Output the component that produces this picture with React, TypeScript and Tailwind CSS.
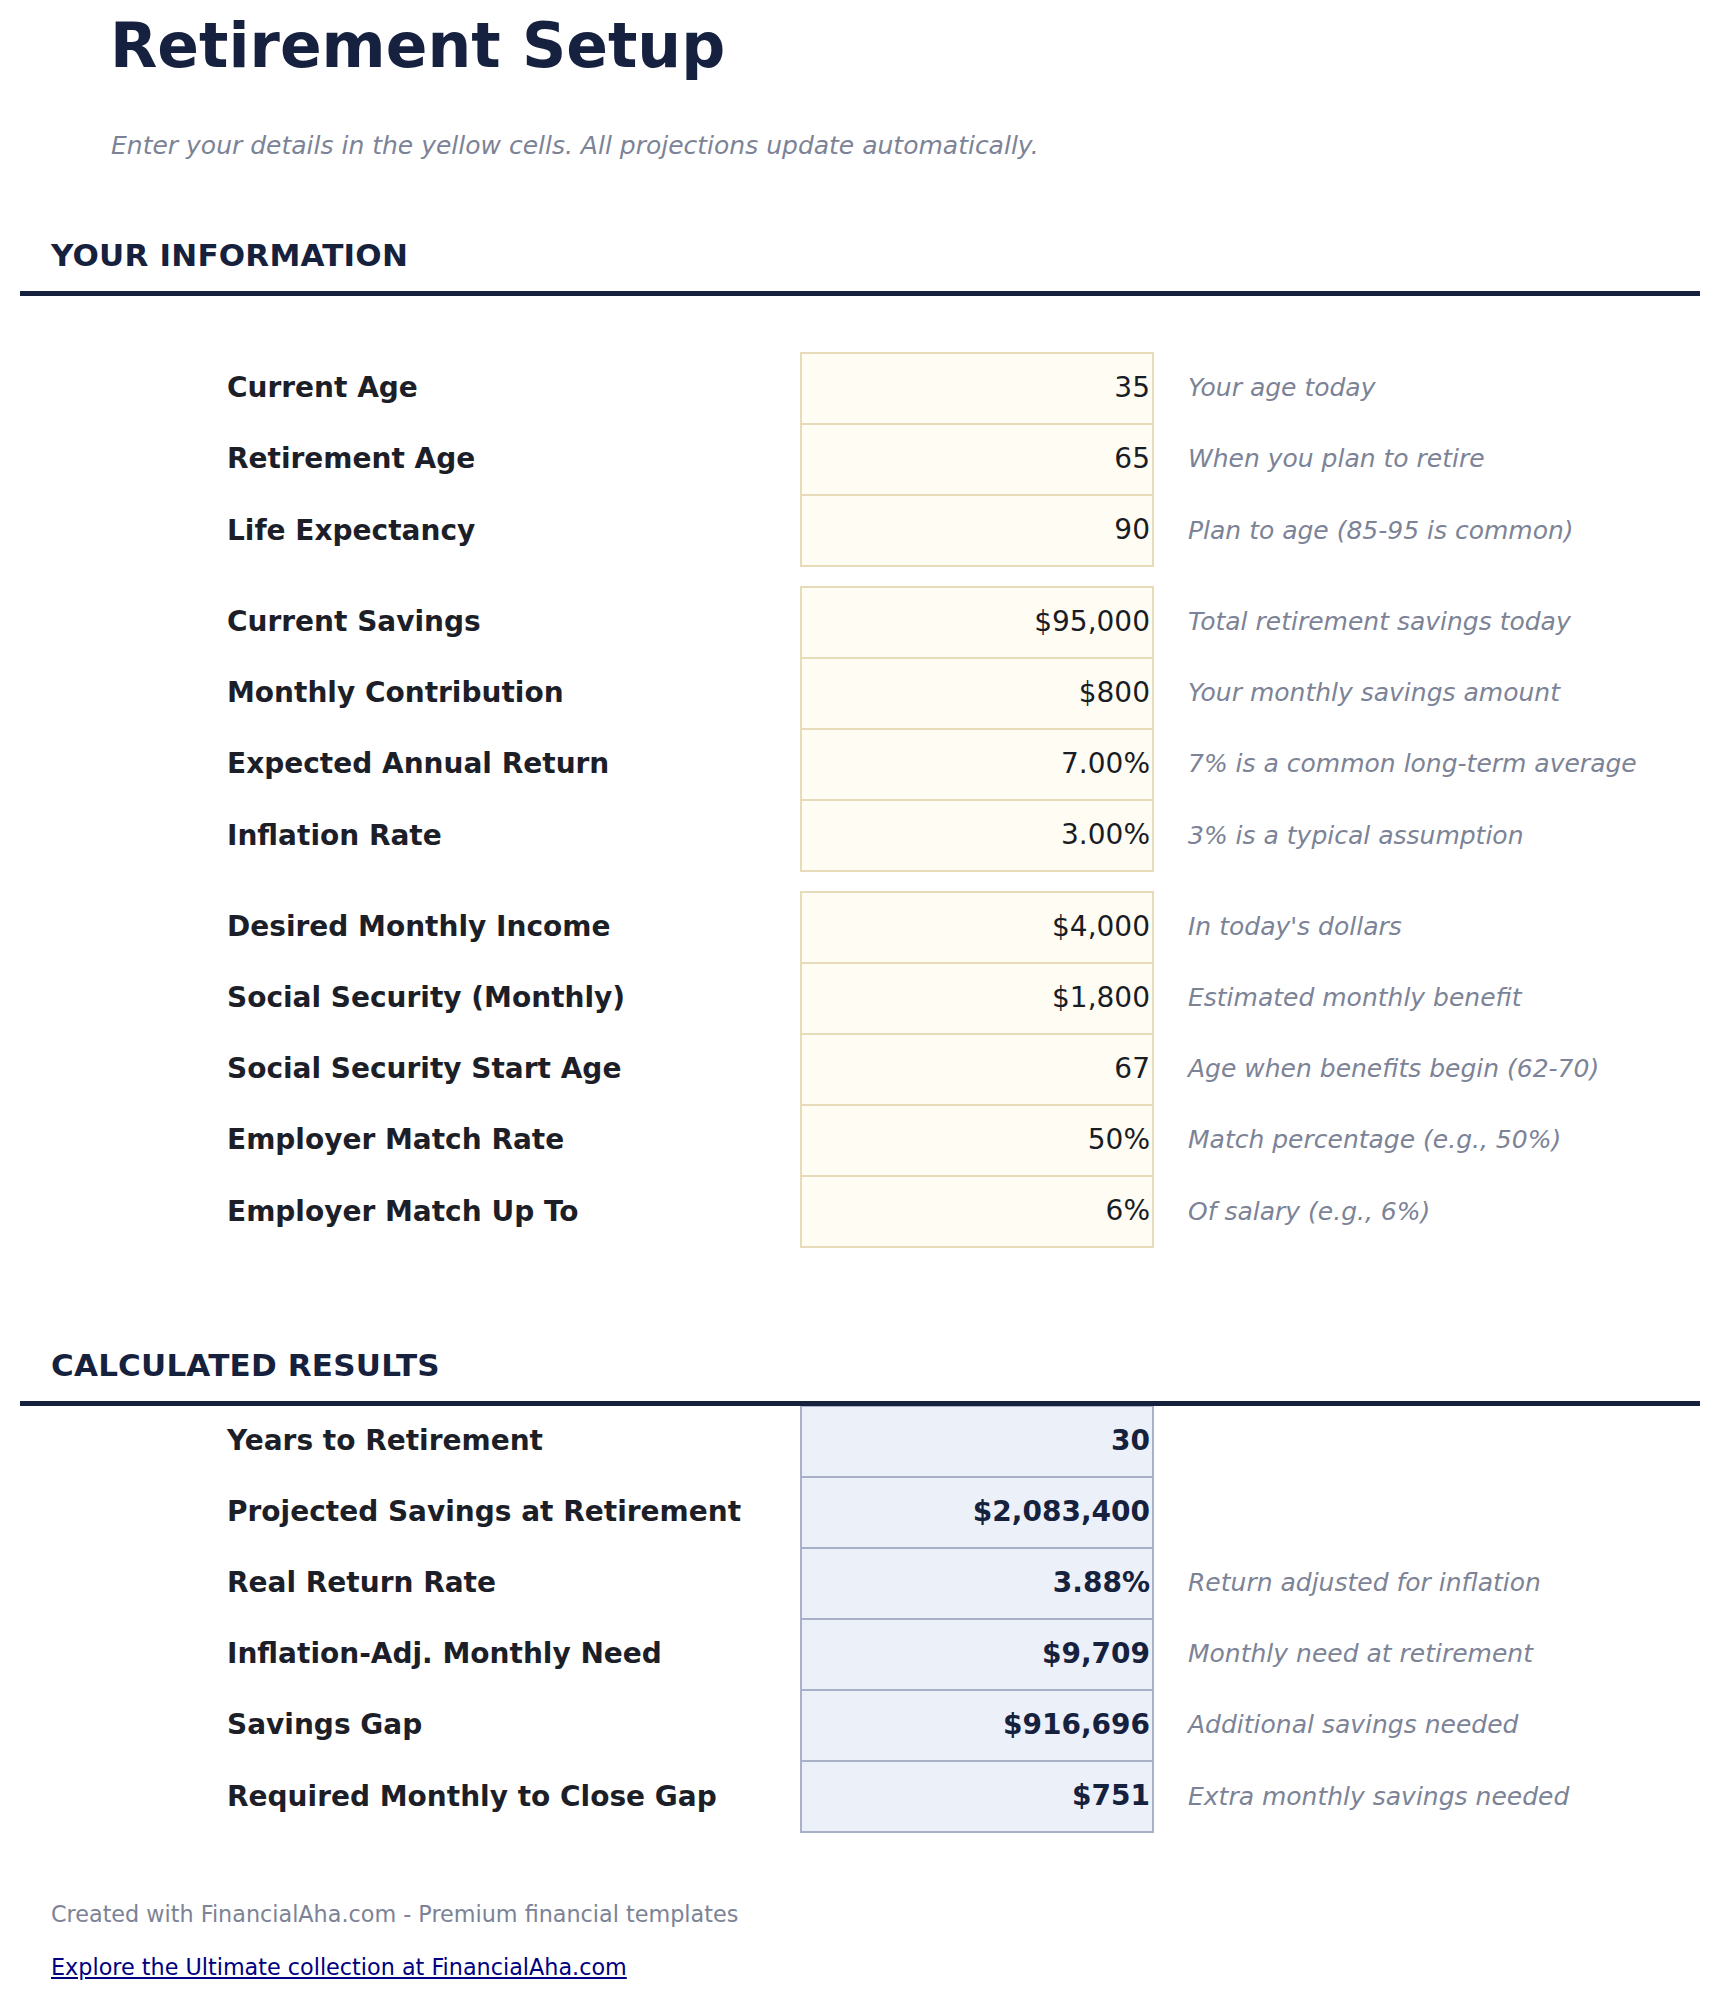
import React from 'react';

interface InputRow {
  label: string;
  value: string;
  note?: string;
}

const inputGroups: InputRow[][] = [
  [
    { label: 'Current Age', value: '35', note: 'Your age today' },
    { label: 'Retirement Age', value: '65', note: 'When you plan to retire' },
    { label: 'Life Expectancy', value: '90', note: 'Plan to age (85-95 is common)' },
  ],
  [
    { label: 'Current Savings', value: '$95,000', note: 'Total retirement savings today' },
    { label: 'Monthly Contribution', value: '$800', note: 'Your monthly savings amount' },
    { label: 'Expected Annual Return', value: '7.00%', note: '7% is a common long-term average' },
    { label: 'Inflation Rate', value: '3.00%', note: '3% is a typical assumption' },
  ],
  [
    { label: 'Desired Monthly Income', value: '$4,000', note: "In today's dollars" },
    { label: 'Social Security (Monthly)', value: '$1,800', note: 'Estimated monthly benefit' },
    { label: 'Social Security Start Age', value: '67', note: 'Age when benefits begin (62-70)' },
    { label: 'Employer Match Rate', value: '50%', note: 'Match percentage (e.g., 50%)' },
    { label: 'Employer Match Up To', value: '6%', note: 'Of salary (e.g., 6%)' },
  ],
];

const results: InputRow[] = [
  { label: 'Years to Retirement', value: '30' },
  { label: 'Projected Savings at Retirement', value: '$2,083,400' },
  { label: 'Real Return Rate', value: '3.88%', note: 'Return adjusted for inflation' },
  { label: 'Inflation-Adj. Monthly Need', value: '$9,709', note: 'Monthly need at retirement' },
  { label: 'Savings Gap', value: '$916,696', note: 'Additional savings needed' },
  { label: 'Required Monthly to Close Gap', value: '$751', note: 'Extra monthly savings needed' },
];

const Row: React.FC<{ row: InputRow; last: boolean; result?: boolean }> = ({ row, last, result }) => (
  <div className={`flex items-stretch pl-[227px] ${last ? 'h-[73px]' : 'h-[71px]'}`}>
    <div className="w-[573px] flex items-center text-[28px] leading-none font-bold text-[#1c1e28] pt-[1px]">
      {row.label}
    </div>
    <div
      className={`w-[354px] flex items-center justify-end pr-[2px] pb-[1px] border-x-2 border-t-2 text-[28px] leading-none ${
        last ? 'border-b-2' : ''
      } ${
        result
          ? 'bg-[#ecf0f8] border-[#a9b1c9] font-bold text-[#16213e]'
          : 'bg-[#fefcf3] border-[#e6dcb9] text-[#1a1c25]'
      }`}
    >
      {row.value}
    </div>
    <div className="pl-[34px] flex items-center text-[25px] leading-none italic text-[#7c8396]">
      {row.note}
    </div>
  </div>
);

const SectionHeader: React.FC<{ title: string }> = ({ title }) => (
  <>
    <h2 className="pl-[51px] text-[31px] leading-none font-bold tracking-[0.2px] text-[#16213e]">{title}</h2>
    <div className="relative mx-[20px] mt-[20px] h-[5px] bg-[#16213e]" />
  </>
);

export default function App() {
  return (
    <div className="w-[1720px] min-h-[2001px] bg-white font-['DejaVu_Sans',sans-serif]">
      <h1 className="pl-[110px] pt-[16px] text-[61.5px] leading-none font-bold text-[#15213f]">Retirement Setup</h1>
      <p className="pl-[111px] mt-[55px] text-[25px] leading-none italic text-[#7c8396]">
        Enter your details in the yellow cells. All projections update automatically.
      </p>

      <div className="mt-[82px]">
        <SectionHeader title="YOUR INFORMATION" />
      </div>

      <div className="mt-[56px] flex flex-col gap-[19px]">
        {inputGroups.map((group, gi) => (
          <div key={gi}>
            {group.map((row, i) => (
              <Row key={row.label} row={row} last={i === group.length - 1} />
            ))}
          </div>
        ))}
      </div>

      <div className="mt-[102px]">
        <SectionHeader title="CALCULATED RESULTS" />
      </div>

      <div className="-mt-[1px]">
        {results.map((row, i) => (
          <Row key={row.label} row={row} last={i === results.length - 1} result />
        ))}
      </div>

      <div className="pl-[51px] mt-[70px] text-[22.3px] leading-none text-[#7c8396]">
        Created with FinancialAha.com - Premium financial templates
      </div>
      <div className="pl-[51px] mt-[31px] text-[22.3px] leading-none">
        <a href="#" className="text-[#000080] underline">
          Explore the Ultimate collection at FinancialAha.com
        </a>
      </div>
    </div>
  );
}
